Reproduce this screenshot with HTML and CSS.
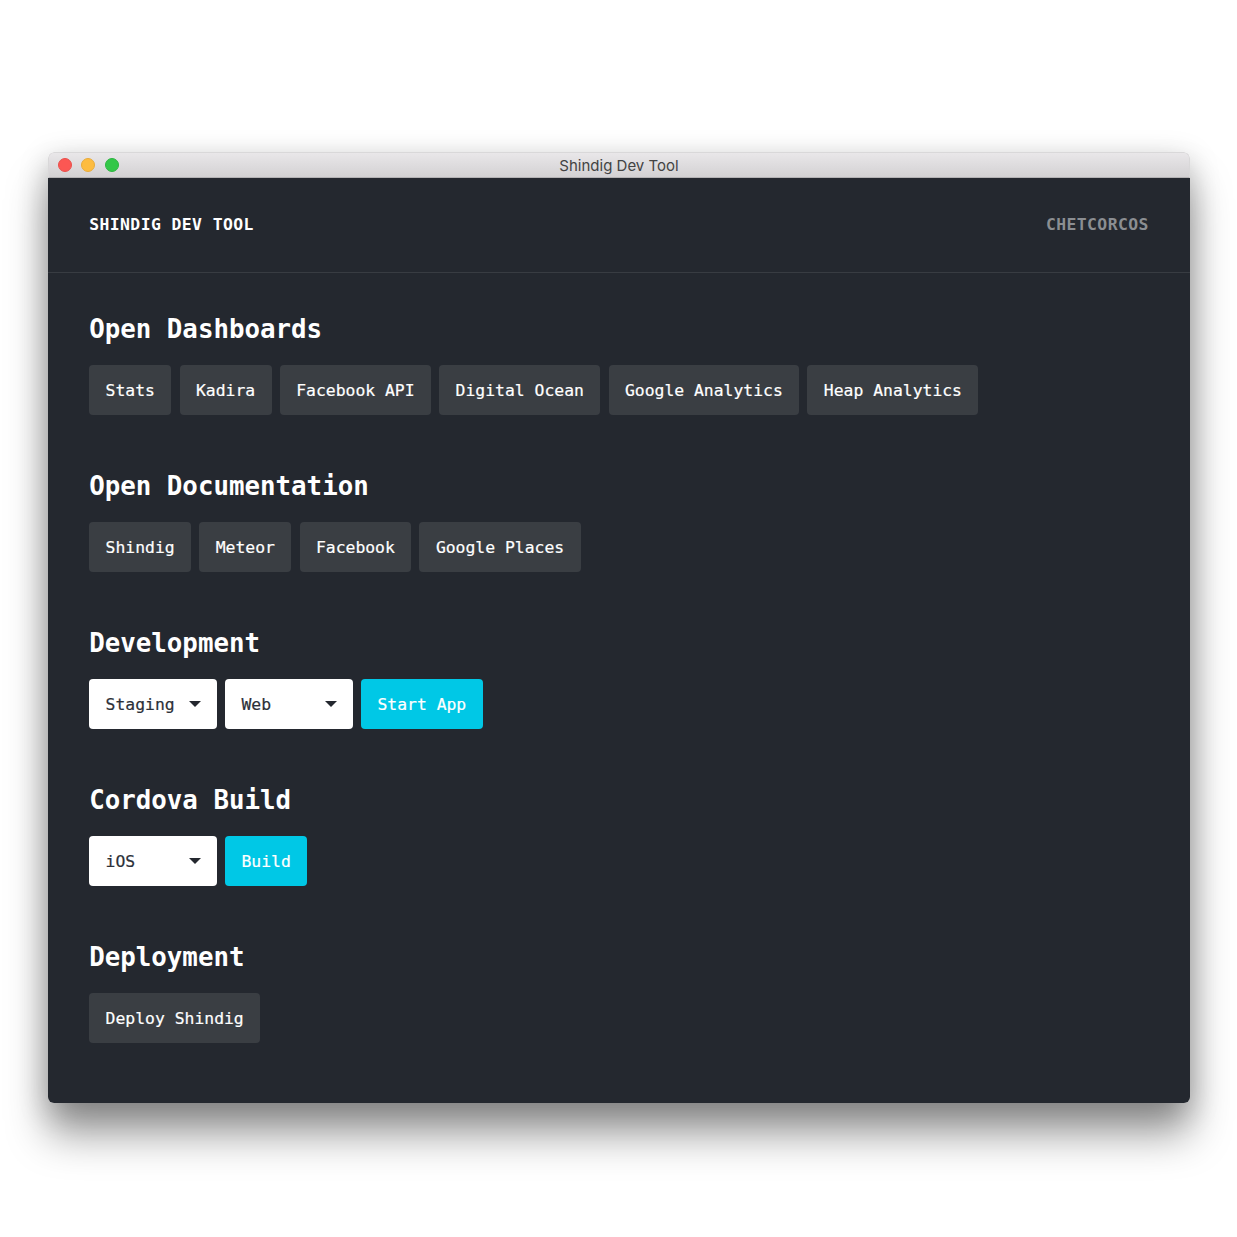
FILE: index.html
```html
<!DOCTYPE html>
<html lang="en">
<head>
<meta charset="utf-8">
<title>Shindig Dev Tool</title>
<link rel="stylesheet" href="styles.css">
</head>
<body>
<div class="window">
  <div class="titlebar">
    <div class="lights"><span class="light red"></span><span class="light yellow"></span><span class="light green"></span></div>
    <div class="title">Shindig Dev Tool</div>
  </div>
  <div class="app">
    <header class="header">
      <div class="brand">SHINDIG DEV TOOL</div>
      <div class="user">CHETCORCOS</div>
    </header>
    <main class="content">
      <section class="section">
        <h2>Open Dashboards</h2>
        <div class="row">
          <button class="btn">Stats</button><button class="btn">Kadira</button><button class="btn">Facebook API</button><button class="btn">Digital Ocean</button><button class="btn">Google Analytics</button><button class="btn">Heap Analytics</button>
        </div>
      </section>
      <section class="section">
        <h2>Open Documentation</h2>
        <div class="row">
          <button class="btn">Shindig</button><button class="btn">Meteor</button><button class="btn">Facebook</button><button class="btn">Google Places</button>
        </div>
      </section>
      <section class="section">
        <h2>Development</h2>
        <div class="row">
          <div class="select"><span>Staging</span><i class="caret"></i></div>
          <div class="select"><span>Web</span><i class="caret"></i></div>
          <button class="btn primary">Start App</button>
        </div>
      </section>
      <section class="section">
        <h2>Cordova Build</h2>
        <div class="row">
          <div class="select"><span>iOS</span><i class="caret"></i></div>
          <button class="btn primary">Build</button>
        </div>
      </section>
      <section class="section">
        <h2>Deployment</h2>
        <div class="row">
          <button class="btn">Deploy Shindig</button>
        </div>
      </section>
    </main>
  </div>
</div>
</body>
</html>
```
FILE: styles.css
```css
* { box-sizing: border-box; }
html, body { margin: 0; background: #fff; }
body { padding: 152px 47px 0 48px; height: 1237px; overflow: hidden; }
.window {
  height: 951px;
  border-radius: 6px;
  overflow: hidden;
  display: flex;
  flex-direction: column;
  box-shadow: 0 32px 42px rgba(0,0,0,.38), 0 8px 30px rgba(0,0,0,.22);
}
.titlebar {
  height: 26px;
  flex: none;
  background: linear-gradient(#e9e7e9, #d3d1d3);
  border: 1px solid #d9d8d9;
  border-bottom: 1px solid #b4b2b4;
  border-radius: 6px 6px 0 0;
  display: flex;
  align-items: center;
  position: relative;
}
.lights { display: flex; gap: 9.5px; padding-left: 8.5px; position: absolute; top: 5px; left: 0; }
.light { width: 14px; height: 14px; border-radius: 50%; display: block; }
.red { background: #fc5753; border: 1px solid #e8504c; }
.yellow { background: #fdbc40; border: 1px solid #e8ab3a; }
.green { background: #33c748; border: 1px solid #2db440; }
.title {
  width: 100%;
  text-align: center;
  font: 15px/26px Inter, "Liberation Sans", Arial, sans-serif;
  color: #434343;
  padding-top: 1px;
}
.app { flex: 1; background: #24282f; font-family: "DejaVu Sans Mono", monospace; }
.header {
  height: 95px;
  padding: 0 41.2px 2px;
  display: flex;
  justify-content: space-between;
  align-items: center;
  border-bottom: 1px solid #383c42;
  font-size: 16.4px;
  font-weight: 700;
  letter-spacing: .42px;
}
.brand { color: #fff; }
.user { color: #8b8e92; }
.content { padding: 37px 41.2px 0; }
.section { height: 157px; }
h2 {
  margin: 0;
  height: 55px;
  font-size: 25.8px;
  line-height: 39px;
  font-weight: 700;
  color: #fff;
}
.row { display: flex; gap: 8.24px; height: 50px; }
.btn {
  height: 49.6px;
  padding: .8px 16.4px 0;
  border: 0;
  border-radius: 4px;
  background: #3a3e43;
  color: #fff;
  font: 16.4px "DejaVu Sans Mono", monospace;
  -webkit-text-stroke: .2px currentColor;
}
.btn.primary { background: #00c8e6; }
.select {
  width: 127.7px;
  height: 49.6px;
  padding: .8px 16.4px 0;
  background: #fff;
  border-radius: 4px;
  color: #2c3038;
  font-size: 16.4px;
  display: flex;
  align-items: center;
  position: relative;
  -webkit-text-stroke: .2px currentColor;
}
.caret {
  position: absolute;
  right: 16px;
  top: 21.5px;
  width: 0;
  height: 0;
  border-left: 6px solid transparent;
  border-right: 6px solid transparent;
  border-top: 6px solid #24282f;
}
```
